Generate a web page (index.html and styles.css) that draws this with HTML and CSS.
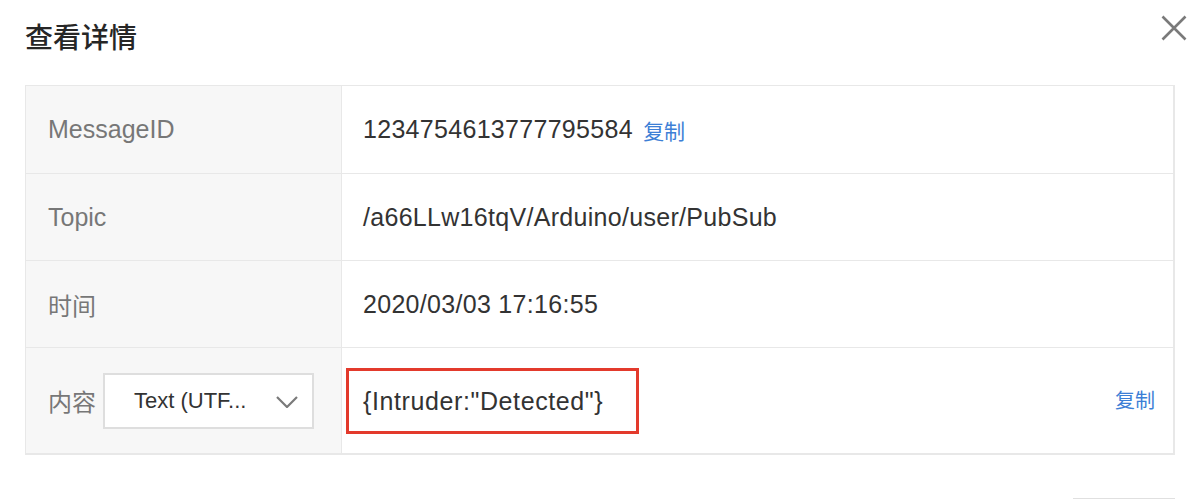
FILE: index.html
```html
<!DOCTYPE html>
<html lang="zh-CN">
<head>
<meta charset="utf-8">
<title>查看详情</title>
<link rel="stylesheet" href="styles.css">
</head>
<body>
<div class="dialog">
  <div class="dialog-header">
    <h1 class="dialog-title">查看详情</h1>
    <button class="close-btn" aria-label="关闭">
      <svg width="26" height="26" viewBox="0 0 26 26"><path d="M1.5 1.5 L24.5 24.5 M24.5 1.5 L1.5 24.5" stroke="#7a7a7a" stroke-width="2.6" fill="none"/></svg>
    </button>
  </div>
  <div class="detail-table">
    <div class="row row-1">
      <div class="label">MessageID</div>
      <div class="value">1234754613777795584 <a class="link">复制</a></div>
    </div>
    <div class="row">
      <div class="label">Topic</div>
      <div class="value">/a66LLw16tqV/Arduino/user/PubSub</div>
    </div>
    <div class="row">
      <div class="label label-cjk">时间</div>
      <div class="value">2020/03/03 17:16:55</div>
    </div>
    <div class="row row-content">
      <div class="label"><span class="label-text">内容</span>
        <div class="select">
          <span class="select-text">Text (UTF...</span>
          <svg class="chevron" width="22" height="12" viewBox="0 0 22 12"><path d="M1 1 L11 11 L21 1" stroke="#7a7a7a" stroke-width="2.2" fill="none"/></svg>
        </div>
      </div>
      <div class="value value-content">
        <div class="highlight">{Intruder:"Detected"}</div>
        <a class="link">复制</a>
      </div>
    </div>
  </div>
  <div class="dialog-footer">
    <button class="footer-btn" aria-label="关闭"></button>
  </div>
</div>
</body>
</html>
```
FILE: styles.css
```css
* { box-sizing: border-box; }
html, body {
  margin: 0;
  padding: 0;
  background: #ffffff;
  overflow: hidden;
}
body {
  font-family: "Liberation Sans", "Noto Sans CJK SC", sans-serif;
  color: #333333;
}
.dialog {
  padding: 0 25px;
  width: 1200px;
}
.dialog-header {
  height: 85px;
  display: flex;
  justify-content: space-between;
  align-items: flex-start;
}
.dialog-title {
  margin: 18px 0 0 0;
  font-family: "Noto Sans CJK SC", sans-serif;
  font-size: 28px;
  font-weight: 500;
  line-height: 36px;
  color: #262626;
}
.close-btn {
  margin: 15px -12px 0 0;
  padding: 0;
  border: none;
  background: none;
  width: 26px;
  height: 26px;
  display: block;
}
.close-btn svg { display: block; }
.detail-table {
  width: 1150px;
  border: 1px solid #e8e8e8;
  border-bottom-width: 2px;
  border-right-width: 2px;
}
.row {
  display: grid;
  grid-template-columns: 316px 1fr;
  height: 87px;
  border-bottom: 1px solid #e8e8e8;
}
.row-1 { height: 88px; }
.row-content {
  height: 105px;
  border-bottom: none;
}
.label {
  background: #f7f7f7;
  border-right: 1px solid #e8e8e8;
  display: flex;
  align-items: center;
  padding-left: 22px;
  font-size: 25px;
  color: #777777;
}
.label-cjk {
  font-family: "Noto Sans CJK SC", sans-serif;
  font-size: 24px;
}
.value {
  display: flex;
  align-items: center;
  padding-left: 21px;
  font-size: 25px;
  letter-spacing: 0.3px;
  color: #333333;
  white-space: pre;
}
.link {
  font-family: "Noto Sans CJK SC", sans-serif;
  font-size: 21px;
  letter-spacing: 0;
  color: #3d7fd6;
  text-decoration: none;
  margin-left: 3px;
}
.label-text {
  font-family: "Noto Sans CJK SC", sans-serif;
  font-size: 24px;
  color: #777777;
  margin-right: 7px;
}
.select {
  width: 211px;
  height: 56px;
  border: 2px solid #dedede;
  background: #ffffff;
  display: flex;
  align-items: center;
  justify-content: space-between;
  padding: 0 14px 0 29px;
  margin-top: 1px;
}
.select-text {
  font-size: 22px;
  color: #333333;
}
.chevron { display: block; margin-top: 1px; }
.value-content {
  padding-left: 4px;
  padding-right: 18px;
  justify-content: space-between;
}
.highlight {
  width: 293px;
  height: 66px;
  border: 3px solid #e33a2c;
  display: flex;
  align-items: center;
  padding-left: 14px;
  font-size: 25px;
  letter-spacing: 0.6px;
  color: #333333;
  margin-top: 1px;
}
.value-content .link { margin-top: -2px; font-size: 20px; }
.dialog-footer {
  display: flex;
  justify-content: flex-end;
  width: 1150px;
  margin-top: 43px;
}
.footer-btn {
  width: 102px;
  height: 40px;
  border: 2px solid #e0e0e0;
  background: #ffffff;
}
```
